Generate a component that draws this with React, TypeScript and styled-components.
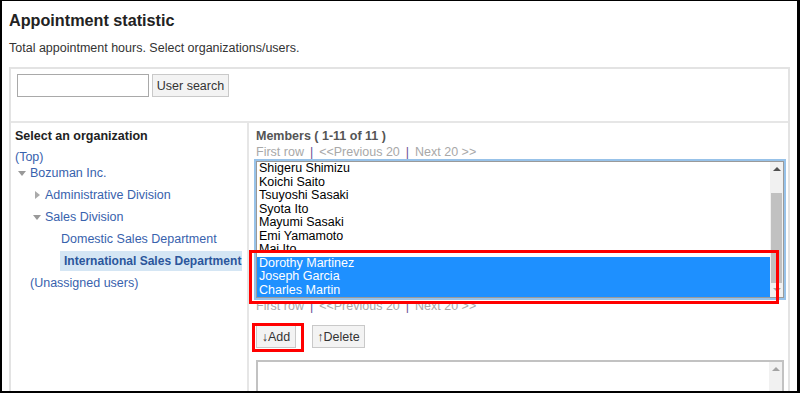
import React from 'react';
import styled, { createGlobalStyle } from 'styled-components';

const GlobalStyle = createGlobalStyle`
  body {
    margin: 0;
    font-family: 'Liberation Sans', Arial, sans-serif;
    background: #fff;
  }
`;

const Frame = styled.div`
  width: 800px;
  height: 393px;
  box-sizing: border-box;
  border-style: solid;
  border-color: #000;
  border-width: 1px 3px 2px 2px;
  padding: 9px 0 0 7px;
  overflow: hidden;
  background: #fff;
`;

const Title = styled.h1`
  margin: 0;
  font-size: 16.2px;
  line-height: 20px;
  font-weight: bold;
  color: #222;
`;

const Lead = styled.p`
  margin: 10px 0 0;
  font-size: 12.5px;
  line-height: 16px;
  color: #333;
`;

const Panel = styled.div`
  margin-top: 11px;
  width: 781px;
  box-sizing: border-box;
  border: 2px solid #e3e3e3;
  border-bottom: none;
  font-size: 12.5px;
`;

const SearchBar = styled.div`
  display: flex;
  gap: 3px;
  padding: 5px 6px 24px;
  border-bottom: 2px solid #e6e6e6;
`;

const SearchInput = styled.input`
  width: 132px;
  height: 23px;
  box-sizing: border-box;
  border: 1px solid #a9a9a9;
  margin: 0;
`;

const Button = styled.button`
  height: 23px;
  width: ${(p: { $w: number }) => p.$w}px;
  box-sizing: border-box;
  padding: 0;
  margin: 0;
  border: 1px solid #c9c9c9;
  background: #f3f3f3;
  color: #333;
  font-family: 'Liberation Sans', Arial, sans-serif;
  font-size: 12.5px;
`;

const Columns = styled.div`
  display: flex;
`;

const OrgColumn = styled.div`
  width: 238px;
  flex: none;
  border-right: 2px solid #e6e6e6;
  padding: 5px 0 0 4px;
  box-sizing: border-box;
  height: 280px;
`;

const Heading = styled.div`
  font-weight: bold;
  line-height: 16px;
  color: ${(p: { $muted?: boolean }) => (p.$muted ? '#555' : '#222')};
`;

const TopLink = styled.div`
  margin-top: 5px;
  line-height: 16px;
  color: #3862ad;
`;

const Tree = styled.div`
  margin-top: -3px;
`;

const TreeRow = styled.div<{ $level: number }>`
  height: 22px;
  display: flex;
  align-items: center;
  padding-left: ${(p) => 2 + (p.$level - 1) * 15}px;
  color: #3862ad;
`;

const Toggle = styled.span`
  width: 13px;
  flex: none;
  display: flex;
  align-items: center;
`;

const Triangle = styled.span<{ $dir: 'down' | 'right' }>`
  width: 0;
  height: 0;
  ${(p) =>
    p.$dir === 'down'
      ? `margin-left: 1px;
         border-left: 4px solid transparent;
         border-right: 4px solid transparent;
         border-top: 5px solid #999;`
      : `margin-left: 3px;
         border-top: 4px solid transparent;
         border-bottom: 4px solid transparent;
         border-left: 5px solid #aaa;`}
`;

const Plain = styled.span`
  padding-left: 1px;
`;

const Current = styled.span`
  width: 182px;
  height: 20px;
  line-height: 20px;
  padding-left: 4px;
  box-sizing: border-box;
  background: #d5e6f4;
  font-weight: bold;
  font-size: 12.05px;
  color: #2b569c;
  white-space: nowrap;
`;

const MemberColumn = styled.div`
  flex: 1;
  padding: 5px 0 0 7px;
`;

const Pager = styled.div`
  line-height: 16px;
  color: #a8a8a8;
  white-space: nowrap;
`;

const Sep = styled.span`
  color: #6b4f96;
  margin: 0 6px;
`;

const ListBox = styled.div`
  position: relative;
  margin: 1px 4px 0 0;
  height: 137px;
  box-sizing: border-box;
  border: 1px solid #9a9a9a;
  box-shadow: 0 0 0 2px #97c2e9;
  display: flex;
  background: #fff;
`;

const Options = styled.div`
  flex: 1;
  overflow: hidden;
`;

const Option = styled.div<{ $selected?: boolean }>`
  height: 13.5px;
  line-height: 13.5px;
  padding-left: 2px;
  white-space: nowrap;
  color: ${(p) => (p.$selected ? '#fff' : '#000')};
  background: ${(p) => (p.$selected ? '#1e90ff' : 'transparent')};
`;

const Scrollbar = styled.div`
  width: 13px;
  flex: none;
  background: #f1f1f1;
  display: flex;
  flex-direction: column;
`;

const ScrollArrow = styled.div<{ $up?: boolean; $dim?: boolean }>`
  height: 14px;
  flex: none;
  display: flex;
  align-items: center;
  justify-content: center;
  &::after {
    content: '';
    width: 0;
    height: 0;
    border-left: 4px solid transparent;
    border-right: 4px solid transparent;
    ${(p) =>
      p.$up
        ? `border-bottom: 4px solid ${p.$dim ? '#a3a3a3' : '#505050'};`
        : `border-top: 4px solid ${p.$dim ? '#a3a3a3' : '#505050'};`}
  }
`;

const Track = styled.div`
  flex: 1;
  display: flex;
  flex-direction: column;
  justify-content: flex-end;
`;

const Thumb = styled.div`
  height: 90px;
  margin: 0 1px;
  background: #c1c1c1;
`;

const RedFrame = styled.div`
  position: absolute;
  box-sizing: border-box;
  border: 3px solid #f00;
  pointer-events: none;
`;

const ButtonRow = styled.div`
  display: flex;
  gap: 16px;
  margin-top: 11px;
`;

const Marked = styled.span`
  position: relative;
  display: inline-flex;
`;

const Selected = styled.div`
  margin: 12px 4px 0 0;
  height: 80px;
  box-sizing: border-box;
  border: 2px solid #c2c2c2;
  border-bottom: none;
  display: flex;
  justify-content: flex-end;
`;

const members = [
  'Shigeru Shimizu',
  'Koichi Saito',
  'Tsuyoshi Sasaki',
  'Syota Ito',
  'Mayumi Sasaki',
  'Emi Yamamoto',
  'Mai Ito',
  'Dorothy Martinez',
  'Joseph Garcia',
  'Charles Martin',
];

const picked = ['Dorothy Martinez', 'Joseph Garcia', 'Charles Martin'];

function PagerLine() {
  return (
    <Pager>
      First row<Sep>|</Sep>&lt;&lt;Previous 20<Sep>|</Sep>Next 20 &gt;&gt;
    </Pager>
  );
}

export default function App() {
  return (
    <>
      <GlobalStyle />
      <Frame>
        <Title>Appointment statistic</Title>
        <Lead>Total appointment hours. Select organizations/users.</Lead>
        <Panel>
          <SearchBar>
            <SearchInput type="text" />
            <Button $w={77}>User search</Button>
          </SearchBar>
          <Columns>
            <OrgColumn>
              <Heading>Select an organization</Heading>
              <TopLink>(Top)</TopLink>
              <Tree>
                <TreeRow $level={1}>
                  <Toggle>
                    <Triangle $dir="down" />
                  </Toggle>
                  Bozuman Inc.
                </TreeRow>
                <TreeRow $level={2}>
                  <Toggle>
                    <Triangle $dir="right" />
                  </Toggle>
                  Administrative Division
                </TreeRow>
                <TreeRow $level={2}>
                  <Toggle>
                    <Triangle $dir="down" />
                  </Toggle>
                  Sales Division
                </TreeRow>
                <TreeRow $level={3}>
                  <Toggle />
                  <Plain>Domestic Sales Department</Plain>
                </TreeRow>
                <TreeRow $level={3}>
                  <Toggle />
                  <Current>International Sales Department</Current>
                </TreeRow>
                <TreeRow $level={1}>
                  <Toggle />
                  (Unassigned users)
                </TreeRow>
              </Tree>
            </OrgColumn>
            <MemberColumn>
              <Heading $muted>Members ( 1-11 of 11 )</Heading>
              <PagerLine />
              <ListBox>
                <Options>
                  {members.map((name) => (
                    <Option key={name} $selected={picked.includes(name)}>
                      {name}
                    </Option>
                  ))}
                </Options>
                <Scrollbar>
                  <ScrollArrow $up />
                  <Track>
                    <Thumb />
                  </Track>
                  <ScrollArrow $dim />
                </Scrollbar>
                <RedFrame style={{ left: -8, top: 88, width: 530, height: 54 }} />
              </ListBox>
              <PagerLine />
              <ButtonRow>
                <Marked>
                  <Button $w={40}>↓Add</Button>
                  <RedFrame style={{ left: -4, top: -2, right: -8, bottom: -4 }} />
                </Marked>
                <Button $w={53}>↑Delete</Button>
              </ButtonRow>
              <Selected>
                <Scrollbar>
                  <ScrollArrow $up $dim />
                </Scrollbar>
              </Selected>
            </MemberColumn>
          </Columns>
        </Panel>
      </Frame>
    </>
  );
}
